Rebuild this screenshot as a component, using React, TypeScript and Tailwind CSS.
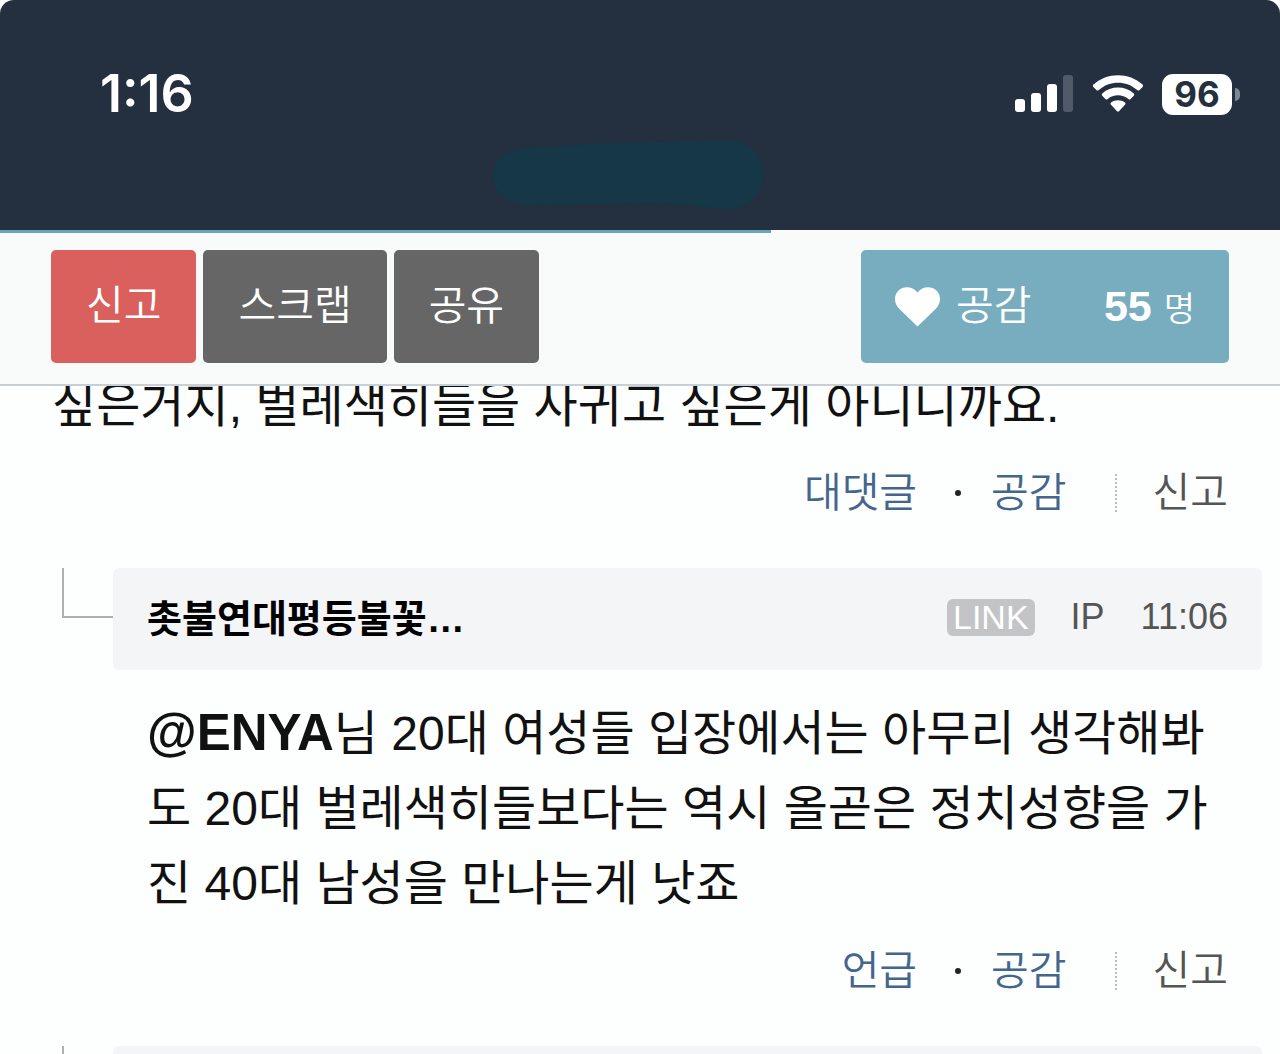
import type { ReactNode } from 'react';

function StatusBar() {
  return (
    <div className="flex items-center justify-between h-[140px] pt-[48px] pl-[100px] pr-[40px]">
      <time className="font-['Inter',sans-serif] text-[52px] font-semibold text-white leading-none">
        1:16
      </time>

      <div className="flex items-center">
        <svg className="w-[60px] h-[38px]" viewBox="0 0 60 38" aria-label="Signal">
          <rect x="1" y="24" width="10" height="13" rx="3" fill="#fff" />
          <rect x="17" y="18" width="10" height="19" rx="3" fill="#fff" />
          <rect x="33" y="9" width="10" height="28" rx="3" fill="#fff" />
          <rect x="49" y="0" width="10" height="37" rx="3" fill="#505a68" />
        </svg>

        <svg className="w-[52px] h-[38px] ml-[18px]" viewBox="0 0 52 38" aria-label="Wi-Fi">
          <path
            d="M1.4 9.6C15-3 37-3 50.6 9.6Q51.6 10.8 50.6 12L47.6 15Q46.4 16 45.2 15C34.5 5.2 17.5 5.2 6.8 15Q5.6 16 4.4 15L1.4 12Q.4 10.8 1.4 9.6Z"
            fill="#fff"
          />
          <path
            d="M10.2 18.4C19 10.6 33 10.6 41.8 18.4Q42.8 19.6 41.8 20.7L38.6 23.9Q37.5 24.9 36.3 23.9C30.4 19 21.6 19 15.7 23.9Q14.5 24.9 13.4 23.9L10.2 20.7Q9.2 19.6 10.2 18.4Z"
            fill="#fff"
          />
          <path
            d="M19 27.4C23 24.4 29 24.4 33 27.4Q34.2 28.5 33 29.7L27.2 36.1Q26 37.3 24.8 36.1L19 29.7Q17.8 28.5 19 27.4Z"
            fill="#fff"
          />
        </svg>

        <div className="flex items-center justify-center w-[70px] h-[41px] ml-[18px] rounded-[11px] bg-white font-['Inter',sans-serif] text-[35px] font-bold leading-none text-[#242f40]">
          96
        </div>
        <div className="w-[5px] h-[13px] ml-[3px] rounded-r-full bg-[#7f8792]" />
      </div>
    </div>
  );
}

function Toolbar() {
  return (
    <div className="relative z-10 bg-[#f9fafa] border-b-2 border-[#c9d0d5]">
      <div className="absolute top-0 left-0 w-[60.2%] h-[3px] bg-[#6ba3b9]" />
      <div className="flex items-center px-[51px] pt-[20px] pb-[21px] gap-[7px] text-[41px] font-[350] text-white">
        <button className="h-[113px] px-[35px] rounded-[5px] bg-[#d9605c]">신고</button>
        <button className="h-[113px] px-[35px] rounded-[5px] bg-[#666666]">스크랩</button>
        <button className="h-[113px] px-[35px] rounded-[5px] bg-[#666666]">공유</button>

        <button className="flex items-center justify-between w-[368px] h-[113px] ml-auto px-[34px] rounded-[5px] bg-[#78adbf]">
          <span className="flex items-center gap-[16px]">
            <svg className="w-[45px] h-[40px]" viewBox="0 0 45 40" fill="#fff" aria-hidden="true">
              <path d="M22.5 39.5L4.2 21.8C-1.6 16-1 7.5 3.6 3.4C9-1.4 17.8-.6 22.5 5.5C27.2-.6 36-1.4 41.4 3.4C46 7.5 46.6 16 40.8 21.8Z" />
            </svg>
            <span>공감</span>
          </span>
          <span className="flex items-baseline gap-[12px]">
            <strong className="text-[43px] font-bold">55</strong>
            <span className="text-[34px]">명</span>
          </span>
        </button>
      </div>
    </div>
  );
}

function CommentActions({ reply }: { reply: string }) {
  return (
    <div className="flex items-center justify-end h-[56px] mt-[22px] pr-[52px] text-[41px] leading-[56px] font-[350] text-[#44658c]">
      <a href="#reply">{reply}</a>
      <span className="w-[6px] h-[6px] ml-[38px] mr-[30px] rounded-full bg-[#222]" />
      <a href="#like">공감</a>
      <span className="h-[38px] ml-[48px] mr-[36px] border-l-2 border-dotted border-[#bbbbbb]" />
      <a href="#report" className="text-[#555555]">
        신고
      </a>
    </div>
  );
}

function ReplyHeader({ children }: { children?: ReactNode }) {
  return (
    <div className="flex mt-[47px] pl-[62px] pr-[18px]">
      <div className="w-[51px] h-[50px] shrink-0 border-l-2 border-b-2 border-[#aeb0b2]" />
      <div className="flex flex-1 items-center justify-between h-[102px] px-[34px] rounded-[6px] bg-[#f4f5f7]">
        {children}
      </div>
    </div>
  );
}

export default function App() {
  return (
    <div className="h-screen overflow-hidden bg-[#fdfefe] font-['Liberation_Sans','Noto_Sans_CJK_KR',sans-serif] text-[#111]">
      <header className="h-[230px] rounded-t-[14px] bg-[#242f40]">
        <StatusBar />
        <svg className="w-[272px] h-[70px] ml-[38.4%]" viewBox="0 0 272 70" aria-hidden="true">
          <path
            d="M32 9C70 3 190 1 240 1C260 3 271 17 271 34C271 54 258 68 238 69C215 69 200 64 170 63L34 65C14 64 1 52 1 36C1 20 12 11 32 9Z"
            fill="#153746"
          />
        </svg>
      </header>

      <Toolbar />

      <main>
        <article>
          <p className="-mt-[18px] px-[52px] text-[48px] leading-[75px]">
            싶은거지, 벌레색히들을 사귀고 싶은게 아니니까요.
          </p>
          <CommentActions reply="대댓글" />
        </article>

        <article>
          <ReplyHeader>
            <strong className="text-[38px] font-bold text-black">촛불연대평등불꽃…</strong>
            <div className="flex items-center pb-[4px] text-[36px] text-[#555555]">
              <a
                href="#link"
                className="px-[6px] rounded-[6px] bg-[#c3c4c6] text-[34px] leading-[37px] text-white"
              >
                LINK
              </a>
              <span className="ml-[36px]">IP</span>
              <time className="ml-[36px]">11:06</time>
            </div>
          </ReplyHeader>
          <p className="mt-[26px] pl-[147px] pr-[52px] text-[48px] leading-[75px]">
            <strong className="text-[51px] leading-none font-bold">@ENYA</strong>님 20대 여성들
            입장에서는 아무리 생각해봐도 20대 벌레색히들보다는 역시 올곧은 정치성향을 가진 40대
            남성을 만나는게 낫죠
          </p>
          <CommentActions reply="언급" />
        </article>

        <ReplyHeader />
      </main>
    </div>
  );
}
